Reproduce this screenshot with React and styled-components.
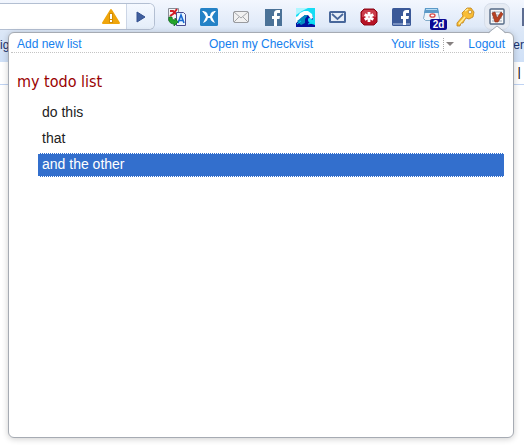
import React from "react";
import styled, { createGlobalStyle } from "styled-components";

const Global = createGlobalStyle`
  * { box-sizing: border-box; }
  body { margin: 0; background: #fff; font-family: "Liberation Sans", Arial, sans-serif; }
  button, input { font: inherit; padding: 0; border: 0; background: none; }
  button { cursor: pointer; }
`;

const Window = styled.div`
  position: relative;
  min-height: 100vh;
  overflow: hidden;
`;
const Chrome = styled.header`
  height: 62px;
  background: linear-gradient(#f3f7fe, #dbe7f7 32px, #cfe0f7);
`;
const Toolbar = styled.div`
  display: flex;
  height: 32px;
  padding-top: 3px;
`;
const AddressBar = styled.div`
  flex: 1;
  min-width: 0;
  display: flex;
  align-items: stretch;
  height: 27px;
  margin-right: 6px;
  border: 1px solid #b3bfd2;
  border-left: 0;
  border-radius: 0 6px 6px 0;
  background: #fff;
  overflow: hidden;
`;
const Address = styled.input`
  flex: 1;
  min-width: 0;
  outline: 0;
`;
const Warning = styled.div`
  display: flex;
  align-items: center;
  margin-right: 5px;
`;
const Go = styled.button`
  display: flex;
  align-items: center;
  justify-content: center;
  width: 28px;
  border-left: 1px solid #ccd6e6;
  background: linear-gradient(#f5f9ff, #e4edf9);
`;
const Extensions = styled.div`
  display: flex;
  align-items: flex-start;
`;
const Extension = styled.button`
  display: flex;
  align-items: center;
  justify-content: center;
  width: 32px;
  height: 27px;
`;
const ActiveExtension = styled(Extension)`
  width: 26px;
  margin: 0 3px;
  border-radius: 7px;
  border: 1px solid #d6deea;
  background: #e6ebf3;
`;
const Overflow = styled.div`
  width: 11px;
  height: 18px;
  margin-top: 5px;
  border-right: 2px solid #5c6c91;
`;
const Bookmarks = styled.div`
  display: flex;
  justify-content: space-between;
  height: 30px;
  padding-top: 5px;
  font-size: 12px;
  line-height: 16px;
  color: #17316c;
`;
const Bookmark = styled.span`
  white-space: nowrap;
`;
const PageStrip = styled.div`
  display: flex;
  justify-content: flex-end;
  height: 23px;
  padding: 2px 3px 0 0;
  border-bottom: 1px solid #bfd3f3;
  font-size: 13px;
  line-height: 16px;
  color: #111;
`;
const Popup = styled.main`
  position: absolute;
  top: 32px;
  right: 10px;
  bottom: 7px;
  left: 8px;
  padding: 0 2px;
  border: 1px solid #a6abb3;
  border-radius: 6px;
  background: #fff;
  box-shadow: 0 1px 6px rgba(0, 0, 0, 0.2);
`;
const Pointer = styled.svg`
  position: absolute;
  top: -8px;
  right: 7px;
`;
const Nav = styled.nav`
  display: grid;
  grid-template-columns: 1fr auto 1fr;
  height: 20px;
  padding: 2px 6px 0;
  border-bottom: 1px dotted #c4c4c4;
  font-size: 12px;
  line-height: 18px;
`;
const NavLink = styled.a`
  color: #1580ee;
  text-decoration: none;
`;
const NavEnd = styled.div`
  display: flex;
  justify-content: flex-end;
  align-items: center;
`;
const MenuToggle = styled.button`
  display: flex;
  align-items: center;
  justify-content: center;
  height: 13px;
  width: 13px;
  margin: 0 12px 0 4px;
  border-left: 1px dotted #aaa;
`;
const Title = styled.h1`
  margin: 18px 6px 8px;
  font: 400 16px/22px "DejaVu Sans Condensed", "Noto Sans", sans-serif;
  color: #990000;
`;
const Items = styled.ul`
  display: grid;
  gap: 2px;
  margin: 0 7px 0 27px;
  padding: 0;
  list-style: none;
`;
const Item = styled.li`
  height: 24px;
  padding: 0 4px;
  border: dotted ${(p) => (p.$selected ? "#fff" : "transparent")};
  border-width: 1px 0;
  background: ${(p) => (p.$selected ? "#336fcd" : "transparent")};
  color: ${(p) => (p.$selected ? "#fff" : "#222")};
  font-size: 14px;
  line-height: 21px;
`;

const Svg = ({ w = 20, h = 20, children }) => (
  <svg width={w} height={h} viewBox={`0 0 ${w} ${h}`} aria-hidden="true">{children}</svg>
);

const Translate = () => (
  <Svg>
    <path d="M1.5 1.5h10v12h-10z" fill="#f4f4f4" stroke="#8b8f99" />
    <path d="M3 4h3l3 3M10 2L6 7 3 9" stroke="#d11c25" strokeWidth="2" fill="none" />
    <path d="M9.5 5.5h7l2 2v11h-9z" fill="#eaf6ff" stroke="#4a4b8d" />
    <path d="M11 16l3-8 3 8M12 13.5h4" stroke="#1769d2" strokeWidth="1.6" fill="none" />
    <path d="M2 10h3c0 2 1 3 3 3v-2l3 4-4 4v-2c-4 0-6-3-5-7z" fill="#24a52b" stroke="#08661b" strokeWidth=".7" />
  </Svg>
);
const Butterfly = () => (
  <Svg>
    <rect x="1" y="1" width="18" height="18" rx="1.5" fill="#2482c6" />
    <path d="M3 4c4 0 6 2 6 6 0 3-2 5-5 6l3-6C6 8 5 6 3 4zM17 4c-4 0-6 2-6 6 0 3 2 5 5 6l-3-6c1-2 2-4 4-6z" fill="#fff" />
    <path d="M4 4.500c2 1 4 3 4 6M16 4.500c-2 1-4 3-4 6" stroke="#fff" fill="none" />
    <path d="M8 10h4" stroke="#fff" strokeWidth="2" />
  </Svg>
);
const Mail = () => (
  <Svg>
    <rect x="2.500" y="4.500" width="15" height="11" rx="1.500" fill="#f1f1f1" stroke="#999b9f" />
    <path d="M3 5l7 6 7-6M3 15l5-5M17 15l-5-5" fill="none" stroke="#a4a6aa" />
  </Svg>
);
const Facebook = ({ flat }) => flat ? (
  <Svg>
    <path d="M2 2h17v17H2z" fill="#4b7297" />
    <path d="M11 19v-7H9V9h2V7c0-3 1-4 4-4h2v3h-2c-1 0-1 .5-1 1v2h3l-.5 3H14v7z" fill="#fff" />
  </Svg>
) : (
  <Svg>
    <rect x="1" y="1" width="19" height="18" rx="1.5" fill="#3b5998" />
    <path d="M2 16h17v2H2z" fill="#7890c0" />
    <path d="M12 18v-6h-2V9h2V7c0-3 1-4 4-4h2v3h-2c-1 0-1 .5-1 1v2h3l-.5 3H15v6z" fill="#fff" />
  </Svg>
);
const Wave = () => (
  <Svg>
    <path d="M1 1h19v19H1z" fill="#16dcf4" />
    <path d="M1 1h12l-6 3-6 4z" fill="#aff6ff" />
    <path d="M1 16c3-9 7-12 13-10 4 2 5 5 3 7-1-3-4-3-4 0 0 3 4 4 7 5v2H1z" fill="#0512a0" />
    <path d="M1 10l2-1 2-3 4-2 4 0 4 3 1 4-2 1-3-4-3 0-4 3-2 3-3 2z" fill="#fff" />
    <path d="M2 14l4-3 4-3 3 0-3 4 0 4-4 2z" fill="#048cc0" />
    <path d="M13 17l4-1 3 1M2 17l4-3" stroke="#00e1f2" fill="none" />
  </Svg>
);
const Envelope = () => (
  <Svg>
    <rect x="3" y="5" width="15" height="10" rx=".5" fill="#e7eef8" stroke="#48679b" strokeWidth="2" />
    <path d="M5 7l5.5 5L16 7" fill="none" stroke="#48679b" strokeWidth="1.7" />
  </Svg>
);
const RedStar = () => (
  <Svg>
    <path d="M5 2h10l3 3v10l-3 3H5l-3-3V5z" fill="#b71325" stroke="#8b0a19" />
    <path d="M5 3h10l2 2v5H3V5z" fill="#d95b65" opacity=".6" />
    <path d="M10 5v10M5.700 7.500l8.600 5M5.700 12.500l8.600-5" stroke="#fff" strokeWidth="2.800" />
    <circle cx="10" cy="10" r=".7" fill="#c83b49" />
  </Svg>
);
const Calendar = () => (
  <Svg w={28} h={27}>
    <path d="M6.500 6.500h12l2 9-2 2h-12l-2-2z" fill="#eef5fb" stroke="#80aac9" />
    <path d="M6 5h13l1 5H5z" fill="#5c9ac8" />
    <path d="M7 6.500h11" stroke="#b5dcf4" />
    <ellipse cx="13.500" cy="12.500" rx="2.500" ry="1.700" fill="#fff" stroke="#d84845" strokeWidth="1.300" />
    <rect x="11" y="16" width="17" height="11" rx="2" fill="#0b0b94" />
    <text x="19.500" y="25" textAnchor="middle" fill="#fff" fontFamily="Liberation Sans, sans-serif" fontWeight="700" fontSize="10">2d</text>
  </Svg>
);
const Key = () => (
  <Svg>
    <path d="M12 1l4 0 3 4-1 5-4 2-3-1-2 3-1 2-2 0-1 3-3 0v-3l6-7-1-3z" fill="#f9bd35" stroke="#bd811b" strokeWidth=".8" />
    <path d="M10 4l3-2M10 10l-6 7" stroke="#ffec9d" strokeWidth="1.500" />
    <circle cx="15" cy="5" r="1.800" fill="#f8f4df" stroke="#b67b1b" strokeWidth=".7" />
  </Svg>
);
const Check = () => (
  <Svg>
    <rect x="3" y="2" width="14" height="15" rx="1" fill="#f8f8f8" stroke="#556b86" strokeWidth="1.400" />
    <path d="M5 5h10M5 8h10M5 11h10M5 14h10" stroke="#9aa7b5" />
    <path d="M5 6l3-1 2 6 4-6 2 2-5 8-3 0z" fill="#b84322" stroke="#8c2a16" strokeWidth=".6" />
  </Svg>
);

const extensions = [
  ["Translate", <Translate />], ["Butterfly", <Butterfly />], ["Mail", <Mail />],
  ["Facebook", <Facebook flat />], ["Wave", <Wave />], ["Envelope", <Envelope />],
  ["Block", <RedStar />], ["Facebook notifications", <Facebook />],
  ["Calendar", <Calendar />], ["Passwords", <Key />],
];
const items = ["do this", "that", "and the other"];

export default function App() {
  return (
    <Window>
      <Global />
      <Chrome>
        <Toolbar>
          <AddressBar>
            <Address aria-label="Address" />
            <Warning>
              <Svg w={20} h={18}>
                <path d="M10 2L18 15H2z" fill="#efa50b" stroke="#efa50b" strokeWidth="2" strokeLinejoin="round" />
                <path d="M8 5h4v10H8z" fill="#d18c06" />
                <path d="M10 6v5M10 12v2" stroke="#fff" strokeWidth="2" />
              </Svg>
            </Warning>
            <Go aria-label="Go">
              <Svg w={10} h={12}><path d="M1 1v10l8-5z" fill="#415f9d" stroke="#345190" strokeLinejoin="round" /></Svg>
            </Go>
          </AddressBar>
          <Extensions>
            {extensions.map(([name, icon]) => <Extension key={name} aria-label={name}>{icon}</Extension>)}
            <ActiveExtension aria-label="Checkvist"><Check /></ActiveExtension>
            <Overflow />
          </Extensions>
        </Toolbar>
        <Bookmarks><Bookmark>ig</Bookmark><Bookmark>ner</Bookmark></Bookmarks>
      </Chrome>
      <PageStrip>|</PageStrip>
      <Popup>
        <Pointer width="18" height="9" viewBox="0 0 18 9" aria-hidden="true">
          <path d="M0 9L9 1l9 8z" fill="#fff" />
          <path d="M0 8L9 1l9 7" fill="none" stroke="#a6abb3" />
        </Pointer>
        <Nav>
          <NavLink href="#new">Add new list</NavLink>
          <NavLink href="#open">Open my Checkvist</NavLink>
          <NavEnd>
            <NavLink href="#lists">Your lists</NavLink>
            <MenuToggle aria-label="Choose a list">
              <Svg w={8} h={5}><path d="M0 0h8L4 4z" fill="#858080" /></Svg>
            </MenuToggle>
            <NavLink href="#logout">Logout</NavLink>
          </NavEnd>
        </Nav>
        <Title>my todo list</Title>
        <Items>
          {items.map((item, i) => <Item key={item} $selected={i === 2}>{item}</Item>)}
        </Items>
      </Popup>
    </Window>
  );
}
